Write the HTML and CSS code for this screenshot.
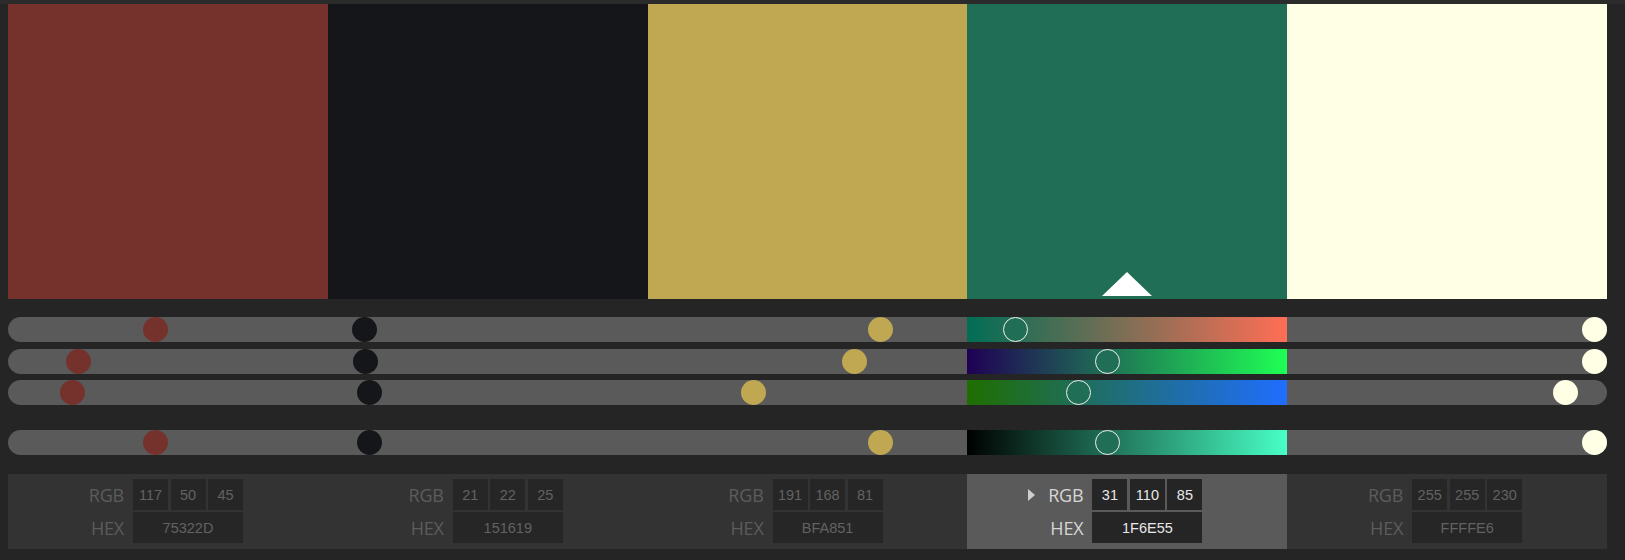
FILE: index.html
```html
<!DOCTYPE html>
<html>
<head>
<meta charset="utf-8">
<link rel="stylesheet" href="styles.css">
</head>
<body>
<div class="topbar"></div>
<div class="app">
  <div class="swatches">
    <div class="swatch c0"></div>
    <div class="swatch c1"></div>
    <div class="swatch c2"></div>
    <div class="swatch c3 selected"><span class="pointer"></span></div>
    <div class="swatch c4"></div>
  </div>

  <div class="sliders">
    <div class="track">
      <span class="seg"></span><span class="seg"></span><span class="seg"></span><span class="seg grad-r"></span><span class="seg"></span>
      <span class="thumb c0" style="--i:0;--v:117"></span>
      <span class="thumb c1" style="--i:1;--v:21"></span>
      <span class="thumb c2" style="--i:2;--v:191"></span>
      <span class="thumb c3 active" style="--i:3;--v:31"></span>
      <span class="thumb c4" style="--i:4;--v:255"></span>
    </div>
    <div class="track">
      <span class="seg"></span><span class="seg"></span><span class="seg"></span><span class="seg grad-g"></span><span class="seg"></span>
      <span class="thumb c0" style="--i:0;--v:50"></span>
      <span class="thumb c1" style="--i:1;--v:22"></span>
      <span class="thumb c2" style="--i:2;--v:168"></span>
      <span class="thumb c3 active" style="--i:3;--v:110"></span>
      <span class="thumb c4" style="--i:4;--v:255"></span>
    </div>
    <div class="track">
      <span class="seg"></span><span class="seg"></span><span class="seg"></span><span class="seg grad-b"></span><span class="seg"></span>
      <span class="thumb c0" style="--i:0;--v:45"></span>
      <span class="thumb c1" style="--i:1;--v:25"></span>
      <span class="thumb c2" style="--i:2;--v:81"></span>
      <span class="thumb c3 active" style="--i:3;--v:85"></span>
      <span class="thumb c4" style="--i:4;--v:230"></span>
    </div>
    <div class="track track-value">
      <span class="seg"></span><span class="seg"></span><span class="seg"></span><span class="seg grad-v"></span><span class="seg"></span>
      <span class="thumb c0" style="--i:0;--v:117"></span>
      <span class="thumb c1" style="--i:1;--v:25"></span>
      <span class="thumb c2" style="--i:2;--v:191"></span>
      <span class="thumb c3 active" style="--i:3;--v:110"></span>
      <span class="thumb c4" style="--i:4;--v:255"></span>
    </div>
  </div>

  <div class="panel">
    <div class="cell">
      <div class="label">RGB</div>
      <div class="boxes"><span class="box">117</span><span class="box">50</span><span class="box">45</span></div>
      <div class="label">HEX</div>
      <div class="boxes"><span class="box wide">75322D</span></div>
    </div>
    <div class="cell">
      <div class="label">RGB</div>
      <div class="boxes"><span class="box">21</span><span class="box">22</span><span class="box">25</span></div>
      <div class="label">HEX</div>
      <div class="boxes"><span class="box wide">151619</span></div>
    </div>
    <div class="cell">
      <div class="label">RGB</div>
      <div class="boxes"><span class="box">191</span><span class="box">168</span><span class="box">81</span></div>
      <div class="label">HEX</div>
      <div class="boxes"><span class="box wide">BFA851</span></div>
    </div>
    <div class="cell selected">
      <div class="label"><span class="arrow"></span>RGB</div>
      <div class="boxes"><span class="box">31</span><span class="box">110</span><span class="box">85</span></div>
      <div class="label">HEX</div>
      <div class="boxes"><span class="box wide">1F6E55</span></div>
    </div>
    <div class="cell">
      <div class="label">RGB</div>
      <div class="boxes"><span class="box">255</span><span class="box">255</span><span class="box">230</span></div>
      <div class="label">HEX</div>
      <div class="boxes"><span class="box wide">FFFFE6</span></div>
    </div>
  </div>
</div>
</body>
</html>
```

FILE: styles.css
```css
html, body {
  margin: 0;
  padding: 0;
  background: #252525;
}

.topbar {
  height: 4px;
  background: #2b2b2b;
}

.app {
  width: 1599px;
  padding: 0 8px;
}

.swatches {
  display: flex;
  height: 295px;
}

.swatch {
  flex: 1 1 0;
  position: relative;
}

.c0 { background: #75322D; }
.c1 { background: #151619; }
.c2 { background: #BFA851; }
.c3 { background: #1F6E55; }
.c4 { background: #FFFFE6; }

.pointer {
  position: absolute;
  left: 50%;
  bottom: 3px;
  margin-left: -25px;
  width: 0;
  height: 0;
  border-left: 25px solid transparent;
  border-right: 25px solid transparent;
  border-bottom: 24px solid #ffffff;
}

.sliders {
  margin-top: 18px;
  display: flex;
  flex-direction: column;
  gap: 6.5px;
}

.track {
  position: relative;
  height: 25px;
  display: flex;
}

.track-value {
  margin-top: 18.5px;
}

.seg {
  flex: 1 1 0;
  background: #5a5a5a;
}

.seg:first-child {
  border-radius: 12.5px 0 0 12.5px;
}

.seg:nth-child(5) {
  border-radius: 0 12.5px 12.5px 0;
}

.grad-r { background: linear-gradient(to right, #006E55, #FF6E55); }
.grad-g { background: linear-gradient(to right, #1F0055, #1FFF55); }
.grad-b { background: linear-gradient(to right, #1F6E00, #1F6EFF); }
.grad-v { background: linear-gradient(to right, #000000, #48FFC5); }

.thumb {
  position: absolute;
  top: 0;
  width: 25px;
  height: 25px;
  border-radius: 50%;
  box-sizing: border-box;
  left: calc(var(--i) * 20% + var(--v) / 255 * (20% - 25px));
}

.thumb.active {
  border: 1px solid #f0f0f0;
}

.panel {
  margin-top: 19px;
  display: flex;
  height: 75px;
}

.cell {
  flex: 1 1 0;
  background: #333333;
  display: grid;
  grid-template-columns: 116px 110px;
  grid-template-rows: 31px 31px;
  column-gap: 9px;
  row-gap: 2px;
  padding-top: 5px;
  box-sizing: border-box;
  align-content: start;
}

.cell.selected {
  background: #5a5a5a;
}

.label {
  display: flex;
  align-items: center;
  justify-content: flex-end;
  font-family: "Open Sans", "Noto Sans", sans-serif;
  font-size: 18px;
  color: #5c5c5c;
  letter-spacing: -0.2px;
}

.cell.selected .label {
  color: #d6d6d6;
}

.arrow {
  width: 0;
  height: 0;
  border-left: 7px solid #cfcfcf;
  border-top: 6.5px solid transparent;
  border-bottom: 6.5px solid transparent;
  margin-right: 13px;
}

.boxes {
  display: flex;
  gap: 2.5px;
}

.box {
  width: 35px;
  height: 31px;
  background: #262626;
  display: flex;
  align-items: center;
  justify-content: center;
  font-family: "Liberation Sans", Arial, sans-serif;
  font-size: 14.5px;
  color: #626262;
}

.box.wide {
  width: 110px;
}

.cell.selected .box {
  background: #252525;
  color: #e8e8e8;
}
```
